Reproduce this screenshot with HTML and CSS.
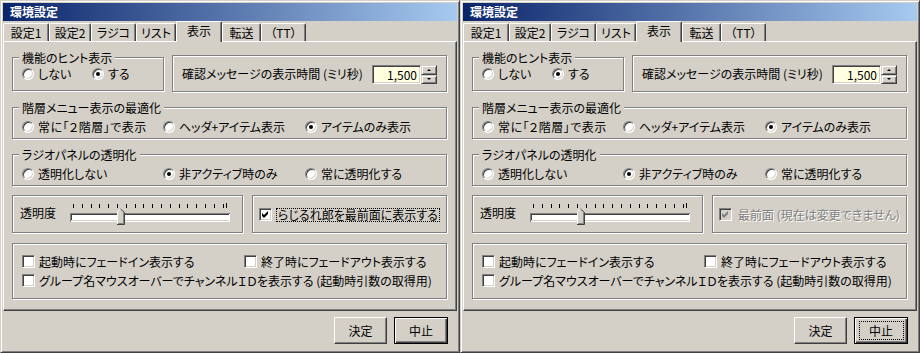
FILE: index.html
```html
<!DOCTYPE html>
<html lang="ja">
<head>
<meta charset="utf-8">
<title>環境設定</title>
<link rel="stylesheet" href="styles.css">
</head>
<body>
<div class="desktop">
  <div class="window">
    <div class="titlebar">環境設定</div>
    <div class="tabs">
      <div class="tab t1">設定1</div>
      <div class="tab t2">設定2</div>
      <div class="tab t3">ラジコ</div>
      <div class="tab t4">リスト</div>
      <div class="tab t5 active">表示</div>
      <div class="tab t6">転送</div>
      <div class="tab t7">（TT）</div>
    </div>
    <div class="panel">
      <div class="row row1">
        <div class="etched g-hint">
          <div class="legend">機能のヒント表示</div>
          <div class="opts">
            <div class="opt o-a"><span class="radio"></span>しない</div>
            <div class="opt"><span class="radio on"></span>する</div>
          </div>
        </div>
        <div class="etched box-time">
          <span>確認メッセージの表示時間 (ミリ秒)</span>
          <div class="spin">
            <div class="spin-input">1,500</div>
            <div class="spin-btns"><span class="sb up"></span><span class="sb down"></span></div>
          </div>
        </div>
      </div>
      <div class="row row2">
        <div class="etched g-wide">
          <div class="legend">階層メニュー表示の最適化</div>
          <div class="opts3">
            <div class="opt"><span class="radio"></span><span class="spaced">常に「２階層」で表示</span></div>
            <div class="opt"><span class="radio"></span>ヘッダ+アイテム表示</div>
            <div class="opt"><span class="radio on"></span>アイテムのみ表示</div>
          </div>
        </div>
      </div>
      <div class="row row3">
        <div class="etched g-wide">
          <div class="legend">ラジオパネルの透明化</div>
          <div class="opts3">
            <div class="opt"><span class="radio"></span>透明化しない</div>
            <div class="opt"><span class="radio on"></span>非アクティブ時のみ</div>
            <div class="opt"><span class="radio"></span>常に透明化する</div>
          </div>
        </div>
      </div>
      <div class="row row4">
        <div class="etched box-slider">
          <span class="slider-label">透明度</span>
          <svg class="slider" width="166" height="26" viewBox="0 0 166 26">
            <g fill="#000">
              <rect x="5" y="4" width="1" height="4"/><rect x="14" y="4" width="1" height="4"/><rect x="23" y="4" width="1" height="4"/><rect x="31" y="4" width="1" height="4"/><rect x="40" y="4" width="1" height="4"/><rect x="49" y="4" width="1" height="4"/><rect x="58" y="4" width="1" height="4"/><rect x="67" y="4" width="1" height="4"/><rect x="75" y="4" width="1" height="4"/><rect x="84" y="4" width="1" height="4"/><rect x="93" y="4" width="1" height="4"/><rect x="102" y="4" width="1" height="4"/><rect x="111" y="4" width="1" height="4"/><rect x="119" y="4" width="1" height="4"/><rect x="128" y="4" width="1" height="4"/><rect x="137" y="4" width="1" height="4"/><rect x="146" y="4" width="1" height="4"/><rect x="155" y="4" width="1" height="4"/><rect x="158" y="3" width="1" height="5"/>
            </g>
            <rect x="2" y="13" width="160" height="9" fill="#fff"/>
            <rect x="2" y="13" width="160" height="1" fill="#808080"/>
            <rect x="2" y="13" width="1" height="9" fill="#808080"/>
            <rect x="3" y="14" width="158" height="1" fill="#404040"/>
            <rect x="3" y="14" width="1" height="7" fill="#404040"/>
            <rect x="3" y="20" width="158" height="1" fill="#d4d0c8"/>
            <polygon points="49,12 52.5,8.5 56,12 56,24 49,24" fill="#d4d0c8"/>
            <path d="M49.5 24 V12 L52.5 9" stroke="#fff" fill="none"/>
            <path d="M52.5 9 L56.5 12.5 V24.5 H49" stroke="#404040" fill="none"/>
            <path d="M55.5 12.5 V23.5 H50" stroke="#808080" fill="none"/>
          </svg>
        </div>
        <div class="etched box-check">
          <span class="cb"><svg width="9" height="9" viewBox="0 0 9 9"><path d="M1 3 L3 5 L7 1 L7 4 L3 8 L1 6 Z" fill="#000"/></svg></span>
          <span class="focus-label">らじるれ郎を最前面に表示する</span>
        </div>
      </div>
      <div class="row row5">
        <div class="etched box-fade">
          <div class="cb-grid">
            <div class="opt"><span class="cb"></span>起動時にフェードイン表示する</div>
            <div class="opt"><span class="cb"></span>終了時にフェードアウト表示する</div>
            <div class="opt wide"><span class="cb"></span>グループ名マウスオーバーでチャンネルＩＤを表示する (起動時引数の取得用)</div>
          </div>
        </div>
      </div>
    </div>
    <div class="buttons">
      <div class="btn">決定</div>
      <div class="btn default">中止</div>
    </div>
  </div>

  <div class="window">
    <div class="titlebar">環境設定</div>
    <div class="tabs">
      <div class="tab t1">設定1</div>
      <div class="tab t2">設定2</div>
      <div class="tab t3">ラジコ</div>
      <div class="tab t4">リスト</div>
      <div class="tab t5 active">表示</div>
      <div class="tab t6">転送</div>
      <div class="tab t7">（TT）</div>
    </div>
    <div class="panel">
      <div class="row row1">
        <div class="etched g-hint">
          <div class="legend">機能のヒント表示</div>
          <div class="opts">
            <div class="opt o-a"><span class="radio"></span>しない</div>
            <div class="opt"><span class="radio on"></span>する</div>
          </div>
        </div>
        <div class="etched box-time">
          <span>確認メッセージの表示時間 (ミリ秒)</span>
          <div class="spin">
            <div class="spin-input">1,500</div>
            <div class="spin-btns"><span class="sb up"></span><span class="sb down"></span></div>
          </div>
        </div>
      </div>
      <div class="row row2">
        <div class="etched g-wide">
          <div class="legend">階層メニュー表示の最適化</div>
          <div class="opts3">
            <div class="opt"><span class="radio"></span><span class="spaced">常に「２階層」で表示</span></div>
            <div class="opt"><span class="radio"></span>ヘッダ+アイテム表示</div>
            <div class="opt"><span class="radio on"></span>アイテムのみ表示</div>
          </div>
        </div>
      </div>
      <div class="row row3">
        <div class="etched g-wide">
          <div class="legend">ラジオパネルの透明化</div>
          <div class="opts3">
            <div class="opt"><span class="radio"></span>透明化しない</div>
            <div class="opt"><span class="radio on"></span>非アクティブ時のみ</div>
            <div class="opt"><span class="radio"></span>常に透明化する</div>
          </div>
        </div>
      </div>
      <div class="row row4">
        <div class="etched box-slider">
          <span class="slider-label">透明度</span>
          <svg class="slider" width="166" height="26" viewBox="0 0 166 26">
            <g fill="#000">
              <rect x="5" y="4" width="1" height="4"/><rect x="14" y="4" width="1" height="4"/><rect x="23" y="4" width="1" height="4"/><rect x="31" y="4" width="1" height="4"/><rect x="40" y="4" width="1" height="4"/><rect x="49" y="4" width="1" height="4"/><rect x="58" y="4" width="1" height="4"/><rect x="67" y="4" width="1" height="4"/><rect x="75" y="4" width="1" height="4"/><rect x="84" y="4" width="1" height="4"/><rect x="93" y="4" width="1" height="4"/><rect x="102" y="4" width="1" height="4"/><rect x="111" y="4" width="1" height="4"/><rect x="119" y="4" width="1" height="4"/><rect x="128" y="4" width="1" height="4"/><rect x="137" y="4" width="1" height="4"/><rect x="146" y="4" width="1" height="4"/><rect x="155" y="4" width="1" height="4"/><rect x="158" y="3" width="1" height="5"/>
            </g>
            <rect x="2" y="13" width="160" height="9" fill="#fff"/>
            <rect x="2" y="13" width="160" height="1" fill="#808080"/>
            <rect x="2" y="13" width="1" height="9" fill="#808080"/>
            <rect x="3" y="14" width="158" height="1" fill="#404040"/>
            <rect x="3" y="14" width="1" height="7" fill="#404040"/>
            <rect x="3" y="20" width="158" height="1" fill="#d4d0c8"/>
            <polygon points="49,12 52.5,8.5 56,12 56,24 49,24" fill="#d4d0c8"/>
            <path d="M49.5 24 V12 L52.5 9" stroke="#fff" fill="none"/>
            <path d="M52.5 9 L56.5 12.5 V24.5 H49" stroke="#404040" fill="none"/>
            <path d="M55.5 12.5 V23.5 H50" stroke="#808080" fill="none"/>
          </svg>
        </div>
        <div class="etched box-check">
          <span class="cb dis"><svg width="9" height="9" viewBox="0 0 9 9"><path d="M1 3 L3 5 L7 1 L7 4 L3 8 L1 6 Z" fill="#808080"/></svg></span>
          <span class="disabled-label">最前面 (現在は変更できません)</span>
        </div>
      </div>
      <div class="row row5">
        <div class="etched box-fade">
          <div class="cb-grid">
            <div class="opt"><span class="cb"></span>起動時にフェードイン表示する</div>
            <div class="opt"><span class="cb"></span>終了時にフェードアウト表示する</div>
            <div class="opt wide"><span class="cb"></span>グループ名マウスオーバーでチャンネルＩＤを表示する (起動時引数の取得用)</div>
          </div>
        </div>
      </div>
    </div>
    <div class="buttons">
      <div class="btn">決定</div>
      <div class="btn default"><span class="focus-btn">中止</span></div>
    </div>
  </div>
</div>
</body>
</html>
```

FILE: styles.css
```css
* { box-sizing: border-box; }
html, body { margin: 0; padding: 0; }
body {
  width: 920px;
  height: 353px;
  overflow: hidden;
  background: #d4d0c8;
  font-family: "Noto Sans CJK JP", "Noto Sans", sans-serif;
  font-size: 12px;
  line-height: 14px;
  color: #000;
  font-feature-settings: "palt";
}
.desktop { display: flex; width: 920px; height: 353px; }
.window {
  width: 460px;
  height: 353px;
  flex: none;
  display: flex;
  flex-direction: column;
  background: #d4d0c8;
  border: 1px solid;
  border-color: #d4d0c8 #404040 #404040 #d4d0c8;
  box-shadow: inset 1px 1px #fff, inset -1px -1px #808080;
  padding: 2px;
}
.titlebar {
  height: 18px;
  flex: none;
  background: linear-gradient(90deg, #0a246a, #a6caf0);
  color: #fff;
  font-weight: bold;
  line-height: 18px;
  padding-left: 7px;
}
.tabs { display: flex; align-items: flex-end; height: 20px; flex: none; }
.tab {
  height: 18px;
  flex: none;
  text-align: center;
  white-space: nowrap;
  border-left: 1px solid #fff;
  border-top: 1px solid #fff;
  border-right: 1px solid #404040;
  border-radius: 2px 2px 0 0;
  box-shadow: inset -1px 0 #808080;
  padding-top: 1px;
  line-height: 16px;
  background: #d4d0c8;
}
.tab.active { height: 21px; margin-bottom: -1px; position: relative; z-index: 1; }
.t1 { width: 46px; }
.t2 { width: 42px; }
.t3 { width: 45px; }
.t4 { width: 40px; }
.t5 { width: 46px; }
.t6 { width: 39px; }
.t7 { width: 45px; }

.panel {
  height: 270px;
  flex: none;
  border: 1px solid;
  border-color: #fff #404040 #404040 #fff;
  box-shadow: inset -1px -1px #808080;
  padding: 13px 8px 0 8px;
  display: flex;
  flex-direction: column;
}
.row { display: flex; flex: none; align-items: flex-start; }
.row1 { height: 37px; }
.row2 { margin-top: 15px; }
.row3 { margin-top: 15px; }
.row4 { margin-top: 9px; }
.row5 { margin-top: 10px; }

.etched { border: 1px solid #808080; box-shadow: inset 1px 1px #fff, 1px 1px #fff; }
.legend {
  display: block;
  width: fit-content;
  height: 15px;
  line-height: 15px;
  margin: -8px 0 0 -3px;
  padding: 0 3px;
  background: #d4d0c8;
  white-space: nowrap;
}
.g-hint { width: 152px; height: 34px; margin-top: 2px; padding-left: 9px; }
.opts { display: flex; margin-top: 2px; height: 14px; }
.o-a { width: 70px; }
.opt { display: flex; align-items: center; white-space: nowrap; }
.spaced { letter-spacing: 0.5px; }
.radio {
  width: 12px;
  height: 12px;
  flex: none;
  border-radius: 50%;
  background: #fff;
  border: 1px solid;
  border-color: #808080 #fff #fff #808080;
  box-shadow: inset 1px 1px #404040, inset -1px -1px #d4d0c8;
  margin-right: 4px;
  display: grid;
  place-items: center;
}
.radio.on::after { content: ""; width: 4px; height: 4px; border-radius: 50%; background: #000; }

.box-time {
  width: 275px;
  height: 37px;
  margin-left: 8px;
  display: flex;
  align-items: center;
  padding: 1px 9px 0 9px;
  white-space: nowrap;
}
.spin { margin-left: auto; display: flex; height: 19px; flex: none; }
.spin-input {
  width: 49px;
  height: 19px;
  background: #ffffe1;
  border: 1px solid;
  border-color: #808080 #fff #fff #808080;
  box-shadow: inset 1px 1px #404040, inset -1px -1px #d4d0c8;
  text-align: right;
  padding-right: 3px;
  line-height: 17px;
  font-size: 12px;
}
.spin-btns { width: 16px; display: flex; flex-direction: column; }
.sb {
  border: 1px solid;
  border-color: #d4d0c8 #404040 #404040 #d4d0c8;
  box-shadow: inset 1px 1px #fff, inset -1px -1px #808080;
  background: #d4d0c8;
  display: grid;
  place-items: center;
}
.sb.up { height: 10px; }
.sb.down { height: 9px; }
.sb.up::after { content: ""; border-left: 2px solid transparent; border-right: 2px solid transparent; border-bottom: 2px solid #000; }
.sb.down::after { content: ""; border-left: 2px solid transparent; border-right: 2px solid transparent; border-top: 2px solid #000; }

.g-wide { width: 435px; height: 32px; padding-left: 9px; }
.opts3 { margin-top: 5px; display: grid; grid-template-columns: 141px 142px auto; height: 14px; }

.box-slider { width: 231px; height: 38px; display: flex; align-items: flex-start; padding-left: 7px; }
.slider-label { width: 48px; flex: none; margin-top: 9px; line-height: 15px; }
.slider { display: block; flex: none; margin-top: 4px; }

.box-check {
  width: 195px;
  height: 38px;
  margin-left: 9px;
  display: flex;
  align-items: flex-start;
  padding: 12px 0 0 6px;
  white-space: nowrap;
}
.cb {
  width: 13px;
  height: 13px;
  flex: none;
  background: #fff;
  border: 1px solid;
  border-color: #808080 #fff #fff #808080;
  box-shadow: inset 1px 1px #404040, inset -1px -1px #d4d0c8;
  margin-right: 4px;
  display: grid;
  place-items: center;
}
.cb svg { display: block; }
.cb.dis { background: #d4d0c8; }
.focus-label { border: 1px dotted #000; line-height: 12px; padding: 0 1px; }
.disabled-label { color: #808080; text-shadow: 1px 1px 0 #fff; line-height: 12px; padding: 1px 2px; }

.box-fade { width: 435px; height: 56px; padding: 8px 0 0 9px; }
.cb-grid { display: grid; grid-template-columns: 222px auto; grid-auto-rows: 19px; }
.cb-grid .wide { grid-column: 1 / -1; }

.buttons { display: flex; justify-content: flex-end; gap: 7px; padding-right: 9px; margin-top: 6px; flex: none; }
.btn {
  width: 53px;
  height: 27px;
  display: grid;
  place-items: center;
  border: 1px solid;
  border-color: #fff #404040 #404040 #fff;
  box-shadow: inset -1px -1px #808080;
  background: #d4d0c8;
}
.btn.default {
  width: 54px;
  border-color: #000;
  box-shadow: inset 1px 1px #fff, inset -1px -1px #404040, inset -2px -2px #808080;
}
.focus-btn { width: 45px; height: 19px; border: 1px dotted #000; display: grid; place-items: center; }
```
